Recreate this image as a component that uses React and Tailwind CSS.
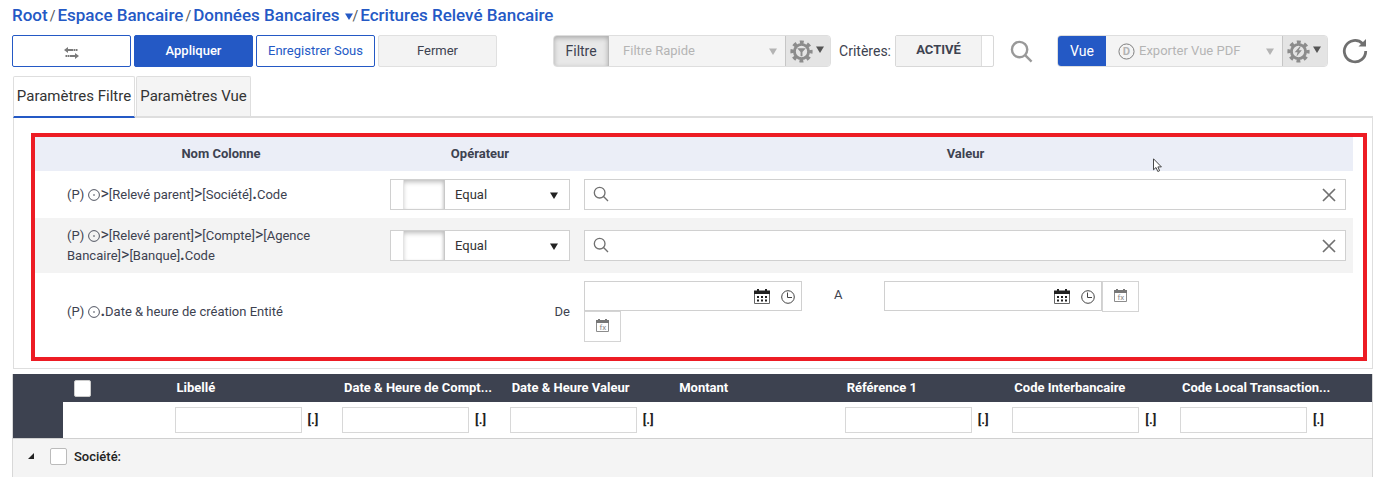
import React from 'react';

const actions = [
  { label: 'Appliquer', style: 'border-[#2459c5] bg-[#2459c5] font-medium text-white' },
  { label: 'Enregistrer Sous', style: 'border-[#2459c5] bg-white text-[#2459c5]' },
  { label: 'Fermer', style: 'border-[#e0e0e0] bg-[#f3f3f3] text-[#3d4250]' }
];

const gridColumns = [
  { title: 'Libellé', filter: true },
  { title: 'Date & Heure de Compt...', filter: true },
  { title: 'Date & Heure Valeur', filter: true },
  { title: 'Montant', filter: false },
  { title: 'Référence 1', filter: true },
  { title: 'Code Interbancaire', filter: true },
  { title: 'Code Local Transaction...', filter: true }
];

const Caret = ({ className = '' }) => (
  <svg viewBox="0 0 8 7" className={`pointer-events-none h-[7px] w-2 shrink-0 ${className}`} fill="currentColor" aria-hidden="true">
    <path d="M0 0.5h8L4 7z" />
  </svg>
);

const Gear = ({ children }) => (
  <svg viewBox="0 0 24 24" className="size-[23px]" fill="none" stroke="#8c8c8c" aria-hidden="true">
    <circle cx="12" cy="12" r="7.4" strokeWidth="3" />
    <circle cx="12" cy="12" r="9.8" strokeWidth="3.6" strokeDasharray="4 3.697" strokeDashoffset="2" />
    {children}
  </svg>
);

const SearchIcon = ({ className, weight }) => (
  <svg viewBox="0 0 24 24" className={className} fill="none" stroke="currentColor" strokeWidth={weight} aria-hidden="true">
    <circle cx="10" cy="10" r="8" />
    <path d="M15.8 15.8L22.5 22.5" />
  </svg>
);

const CalendarIcon = () => (
  <svg viewBox="0 0 16 15" className="h-[15px] w-4" aria-hidden="true">
    <path d="M0.5 3v11.5h15V3" fill="#fff" stroke="#666" />
    <path d="M0 1.5h3V0h2v1.5h6V0h2v1.5h3V5H0z" fill="#222" />
    <path d="M3 7h2v2H3zM7 7h2v2H7zM11 7h2v2h-2zM3 10.5h2v2H3zM7 10.5h2v2H7zM11 10.5h2v2h-2z" fill="#222" />
  </svg>
);

const ClockIcon = () => (
  <svg viewBox="0 0 14 14" className="size-[14px]" fill="none" stroke="#444" aria-hidden="true">
    <circle cx="7" cy="7" r="6.3" />
    <path d="M6.5 2.5V7.5H11" />
  </svg>
);

const FxButton = () => (
  <button type="button" aria-label="Formule" className="flex h-[31px] w-[37px] justify-center border border-[#d4d4d4] bg-white pt-[7px]">
    <svg viewBox="0 0 13 13" className="size-[13px]" aria-hidden="true">
      <path d="M0.5 2v10.5h12V2" fill="#fff" stroke="#8c8c8c" />
      <path d="M0 1h2V0h2v1h5V0h2v1h2v3H0z" fill="#777" />
      <text x="3.5" y="11" fontSize="8" fontFamily="Roboto, sans-serif" fill="#888">fx</text>
    </svg>
  </button>
);

const RootIcon = () => (
  <svg viewBox="0 0 12 12" className="mb-px ml-px inline size-3" fill="none" stroke="#3d4250" strokeWidth="0.9" aria-hidden="true">
    <circle cx="6" cy="6" r="5.4" />
    <circle cx="6" cy="6" r="0.8" fill="#3d4250" stroke="none" />
  </svg>
);

// Segments are joined by arrows, the field name comes after a bold dot
const ColumnPath = ({ path, field }) => (
  <>
    (P) <RootIcon />
    {path.map((part) => (
      <React.Fragment key={part}>
        <span className="text-[16px] leading-none">&gt;</span>{`[${part}]`}
      </React.Fragment>
    ))}
    <b className="text-[16px] leading-none">.</b>{field}
  </>
);

const OperatorSelect = ({ label }) => (
  <div className="flex h-[31px] w-[180px] border border-[#d0d0d0] bg-white">
    <button type="button" role="switch" aria-checked="false" aria-label={`Inverser ${label}`} className="flex w-[54px] border-r border-[#c8c8c8] pl-3">
      <span className="h-full w-full border-l border-[#e4e4e4] shadow-[inset_0_3px_5px_-1px_#bbb,inset_-2px_0_3px_-1px_#ddd]" />
    </button>
    <div className="relative flex-1">
      <select aria-label={`Opérateur ${label}`} className="h-full w-full appearance-none pl-[10px] text-[13px] text-[#333]">
        <option>Equal</option>
      </select>
      <Caret className="absolute top-3 right-[11px] text-[#222]" />
    </div>
  </div>
);

const ValueInput = ({ label }) => (
  <div className="flex h-[31px] items-center border border-[#d0d0d0] bg-white text-[#707070]">
    <button type="button" aria-label="Rechercher" className="px-2 pb-px">
      <SearchIcon className="size-4" weight="2" />
    </button>
    <input type="text" aria-label={label} className="h-full min-w-0 flex-1 outline-none" />
    <button type="button" aria-label="Effacer" className="px-[9px]">
      <svg viewBox="0 0 14 14" className="size-[14px]" fill="none" stroke="currentColor" strokeWidth="1.7" aria-hidden="true">
        <path d="M1 1l12 12M13 1L1 13" />
      </svg>
    </button>
  </div>
);

const DateInput = ({ label }) => (
  <div className="flex h-[30px] w-[218px] items-center border border-[#d0d0d0] bg-white pr-[6px]">
    <input type="text" aria-label={label} className="h-full min-w-0 flex-1 outline-none" />
    <button type="button" aria-label="Choisir la date" className="mr-[11px] pt-px"><CalendarIcon /></button>
    <button type="button" aria-label="Choisir l'heure" className="pt-px"><ClockIcon /></button>
  </div>
);

const QuickGroup = ({ label, labelStyle, icon, option, gear }) => (
  <div className="flex h-8 overflow-hidden rounded border border-[#dedede] bg-[#f4f4f4]">
    <button type="button" className={labelStyle}>{label}</button>
    <div className="relative flex w-44 items-center text-[#b4b4b4]">
      {icon}
      <select disabled aria-label={option} className={`h-full w-full appearance-none text-[13px] text-[#b4b4b4] opacity-100 ${icon ? 'pl-[33px]' : 'pl-[14px]'}`}>
        <option>{option}</option>
      </select>
      <Caret className="absolute top-3 right-2" />
    </div>
    <button type="button" aria-label={`Options ${label}`} className="flex w-[45px] items-center border-l border-[#c6c6c6] bg-[#e4e4e4] pl-1 text-[#555]">
      {gear}
      <Caret className="mb-1 ml-[3px]" />
    </button>
  </div>
);

const Toolbar = () => (
  <div className="mt-[7px] flex h-8 items-center text-[#3d4250]">
    <div className="flex gap-[3px]">
      <button type="button" aria-label="Basculer" className="flex h-8 w-[119px] items-center justify-center rounded-xs border border-[#2459c5]">
        <svg viewBox="0 0 15 12" className="mt-1 h-3 w-[15px]" fill="#7a7a7a" aria-hidden="true">
          <path d="M0 3L4 0v2h5v2H4v2zM9.5 2h2v2h-2zM12 2h1.5v2H12z" />
          <path d="M15 9l-4-3v2H6v2h5v2zM3.5 8h2v2h-2zM1.5 8H3v2H1.5z" />
        </svg>
      </button>
      {actions.map((action) => (
        <button key={action.label} type="button" className={`h-8 w-[119px] rounded-xs border text-[13px] ${action.style}`}>
          {action.label}
        </button>
      ))}
    </div>
    <div className="ml-auto flex items-center">
      <QuickGroup
        label="Filtre"
        labelStyle="w-[55px] border-r border-[#bbb] bg-[#e8e8e8] text-[14px] shadow-[inset_0_2px_5px_#aaa]"
        option="Filtre Rapide"
        gear={<Gear><path d="M7.5 8.5h9L13 12.5V17h-2v-4.5z" fill="#8c8c8c" stroke="none" /></Gear>}
      />
      <span id="criteres" className="ml-2 text-[14px]">Critères:</span>
      <button type="button" role="switch" aria-checked="true" aria-labelledby="criteres" className="ml-1 flex h-8 w-[99px] rounded-xs border border-[#d8d8d8] bg-white text-[13px] font-bold">
        <span className="flex h-full flex-1 items-center justify-center border-r border-[#ddd] bg-[#f3f3f3] pb-[2px]">ACTIVÉ</span>
        <span className="w-[11px]" />
      </button>
      <button type="button" aria-label="Rechercher" className="ml-4 text-[#999]">
        <SearchIcon className="size-[23px]" weight="2.5" />
      </button>
      <div className="ml-6 flex">
        <QuickGroup
          label="Vue"
          labelStyle="w-12 bg-[#2459c5] text-[14px] text-white"
          option="Exporter Vue PDF"
          icon={
            <svg viewBox="0 0 18 18" className="absolute left-3 size-[17px]" aria-hidden="true">
              <circle cx="9" cy="9" r="8" fill="none" stroke="#777" />
              <text x="9" y="13" textAnchor="middle" fontSize="12" fontWeight="700" fontFamily="Roboto, sans-serif" fill="#b4b4b4">D</text>
            </svg>
          }
          gear={<Gear><path d="M13.5 6.5L8 12.8h3L9.8 17.5l5.7-6.8h-3.2L14.5 6.5z" fill="#8c8c8c" stroke="none" /></Gear>}
        />
      </div>
      <button type="button" aria-label="Actualiser" className="mr-[5px] ml-[14px]">
        <svg viewBox="0 0 26 26" className="size-[26px]" fill="none" stroke="#707070" aria-hidden="true">
          <path d="M20.5 5.5A10.7 10.7 0 1 0 23.7 13" strokeWidth="2.8" />
          <path d="M24 1v7.5h-7.5z" fill="#707070" stroke="none" />
        </svg>
      </button>
    </div>
  </div>
);

const FilterPanel = () => (
  <div className="border-x border-b border-[#dedede] pt-[15px] pr-[5px] pb-[7px] pl-[17px]">
    <div className="border-4 border-[#ed1c24] pr-[10px] pb-[7px]">
      <table className="w-full table-fixed text-[13px] leading-5 text-[#3d4250]">
        <colgroup>
          <col className="w-[25px]" />
          <col className="w-[322px]" />
          <col className="w-[196px]" />
          <col />
        </colgroup>
        <thead>
          <tr className="h-[34px] bg-[#ebeef7]">
            <td />
            <th className="font-bold">Nom Colonne</th>
            <th className="font-bold">Opérateur</th>
            <th className="font-bold">Valeur</th>
          </tr>
        </thead>
        <tbody>
          <tr className="h-[47px]">
            <td />
            <td className="pr-10 pl-[7px]"><ColumnPath path={['Relevé parent', 'Société']} field="Code" /></td>
            <td className="px-2"><OperatorSelect label="Société" /></td>
            <td className="pr-[7px] pl-[6px]"><ValueInput label="Valeur Société" /></td>
          </tr>
          <tr className="h-[55px] bg-[#f3f3f3]">
            <td />
            <td className="pr-10 pl-[7px]"><ColumnPath path={['Relevé parent', 'Compte', 'Agence Bancaire', 'Banque']} field="Code" /></td>
            <td className="px-2"><OperatorSelect label="Banque" /></td>
            <td className="pr-[7px] pl-[6px]"><ValueInput label="Valeur Banque" /></td>
          </tr>
          <tr className="h-[77px]">
            <td />
            <td className="pr-10 pl-[7px]"><ColumnPath path={[]} field="Date & heure de création Entité" /></td>
            <td className="px-2 text-right">De</td>
            <td className="pl-[6px]">
              <div className="flex items-start">
                <div className="flex w-[250px] flex-wrap">
                  <DateInput label="De" />
                  <FxButton />
                </div>
                <span className="mt-1 w-[50px]">A</span>
                <div className="flex">
                  <DateInput label="A" />
                  <FxButton />
                </div>
              </div>
            </td>
          </tr>
        </tbody>
      </table>
    </div>
  </div>
);

const ResultGrid = () => (
  <table className="mt-[5px] w-full table-fixed border-x border-[#d8d8d8] text-[13px]">
    <colgroup>
      <col className="w-[50px]" />
      <col className="w-[104px]" />
      {gridColumns.map((column) => <col key={column.title} />)}
      <col className="w-[33px]" />
    </colgroup>
    <thead>
      <tr className="h-7 bg-[#3d4250] text-left text-white">
        <td />
        <td className="pl-[11px]">
          <input type="checkbox" aria-label="Tout sélectionner" className="block size-[17px] appearance-none rounded-xs border border-[#ccc] bg-white" />
        </td>
        {gridColumns.map((column) => (
          <th key={column.title} className="pl-[10px] font-bold whitespace-nowrap">{column.title}</th>
        ))}
        <td />
      </tr>
      <tr className="h-9 border-b border-[#d0d0d0] bg-white">
        <td className="bg-[#3d4250]" />
        <td />
        {gridColumns.map((column) => (
          <td key={column.title} className="pl-2">
            <div className="flex items-center">
              {column.filter && (
                <input type="text" aria-label={`Filtrer ${column.title}`} className="h-[26px] w-[127px] border border-[#d8d8d8]" />
              )}
              {column.filter && (
                <button type="button" aria-label={`Opérateur ${column.title}`} className="ml-[6px] font-bold text-[#222]">[.]</button>
              )}
            </div>
          </td>
        ))}
        <td />
      </tr>
    </thead>
    <tbody>
      <tr className="h-10 bg-[#f4f4f4]">
        <td colSpan={gridColumns.length + 3} className="pb-1">
          <div className="flex items-center pl-[15px] text-[13px] font-medium text-[#222]">
            <button type="button" aria-label="Réduire le groupe" className="mr-4">
              <svg viewBox="0 0 6 6" className="size-[6px]" fill="#222" aria-hidden="true"><path d="M6 0v6H0z" /></svg>
            </button>
            <input id="groupe-societe" type="checkbox" className="size-[17px] appearance-none rounded-xs border border-[#bbb] bg-white" />
            <label htmlFor="groupe-societe" className="ml-[7px]">Société:</label>
          </div>
        </td>
      </tr>
    </tbody>
  </table>
);

const App = () => {
  return (
    <div className="h-screen overflow-hidden bg-white pr-[11px] pl-3 font-['Roboto',sans-serif]">
      <nav className="flex h-7 items-center gap-[2px] pt-1 text-[17px] font-medium text-[#2459c5]">
        <a href="#root">Root</a>
        <span className="text-[14px] font-normal text-[#555]">/</span>
        <a href="#espace">Espace Bancaire</a>
        <span className="text-[14px] font-normal text-[#555]">/</span>
        <a href="#donnees">Données Bancaires</a>
        <button type="button" aria-label="Autres pages" className="ml-1"><Caret /></button>
        <span className="-ml-[3px] text-[14px] font-normal text-[#555]">/</span>
        <a href="#ecritures">Ecritures Relevé Bancaire</a>
      </nav>
      <Toolbar />
      <div className="pl-px">
        <div role="tablist" className="mt-[9px] flex h-[42px] gap-px border-b-2 border-[#dedede] text-[15px] text-[#333]">
          <button type="button" role="tab" aria-selected="true" className="-mb-[2px] w-[122px] rounded-t-xs border-x border-t border-b-2 border-[#dedede] border-b-[#2459c5] bg-white whitespace-nowrap">
            Paramètres Filtre
          </button>
          <button type="button" role="tab" aria-selected="false" className="w-[115px] rounded-t-xs border-x border-t border-[#dedede] bg-[#f4f4f4] whitespace-nowrap">
            Paramètres Vue
          </button>
        </div>
        <FilterPanel />
      </div>
      <ResultGrid />
      <svg viewBox="0 0 9 14" className="pointer-events-none absolute top-[158px] left-[1153px] h-[14px] w-[9px]" fill="#fff" stroke="#333" strokeWidth="0.9" aria-hidden="true">
        <path d="M0.5 0.8v11l2.5-2.3 1.8 4 1.8-0.8-1.7-3.8h3.5z" />
      </svg>
    </div>
  );
};

export default App;
